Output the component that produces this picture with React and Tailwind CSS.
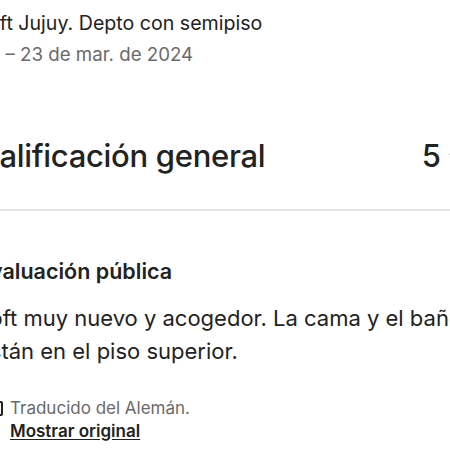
import { Star } from 'lucide-react'

export default function App() {
  return (
    <div className="w-[450px] h-[450px] overflow-hidden bg-white text-[#222222]" style={{ fontFamily: 'Inter, "Noto Sans", sans-serif' }}>
      <div className="ml-[-23px] w-[500px]">
        {/* Cabecera del alojamiento */}
        <div className="pt-[7px]">
          <p className="text-[19.6px] leading-[32px]">Loft Jujuy. Depto con semipiso</p>
          <p className="text-[18.7px] leading-[32px] text-[#6a6a6a]">20 – 23 de mar. de 2024</p>
        </div>

        {/* Calificación */}
        <div className="flex items-center justify-between pr-[12px] mt-[60px] h-[50px]">
          <h2 className="text-[31px] font-medium tracking-[-0.3px]">Calificación general</h2>
          <div className="flex items-center gap-2 text-[31px] font-medium">
            5 <Star className="w-4 h-4 fill-current" />
          </div>
        </div>

        <div className="mt-[28px] h-[2px] bg-[#e4e4e4]" />

        {/* Evaluación */}
        <div className="pt-[46px]">
          <h3 className="text-[21.5px] font-semibold leading-[28px]">Evaluación pública</h3>
          <p className="mt-[17px] text-[22px] leading-[33px]">
            Loft muy nuevo y acogedor. La cama y el baño están en el piso superior.
          </p>
          <div className="mt-[29px] flex gap-[7px]">
            {/* icono de traducción */}
            <svg viewBox="0 0 17 17" className="w-[17px] h-[17px] mt-[3px] ml-[9px]" fill="none" stroke="#222222" strokeWidth="2">
              <path d="M3 2h12a1 1 0 0 1 1 1v11a1 1 0 0 1-1 1H3" />
              <path d="M5 6h7M8.5 4v2M6 12c3-1 5-3 5.5-6" strokeWidth="1.4" />
            </svg>
            <div>
              <p className="text-[17px] leading-[23px] text-[#6a6a6a]">Traducido del Alemán.</p>
              <p className="text-[17px] leading-[23px] font-semibold underline underline-offset-2">Mostrar original</p>
            </div>
          </div>
        </div>
      </div>
    </div>
  )
}
